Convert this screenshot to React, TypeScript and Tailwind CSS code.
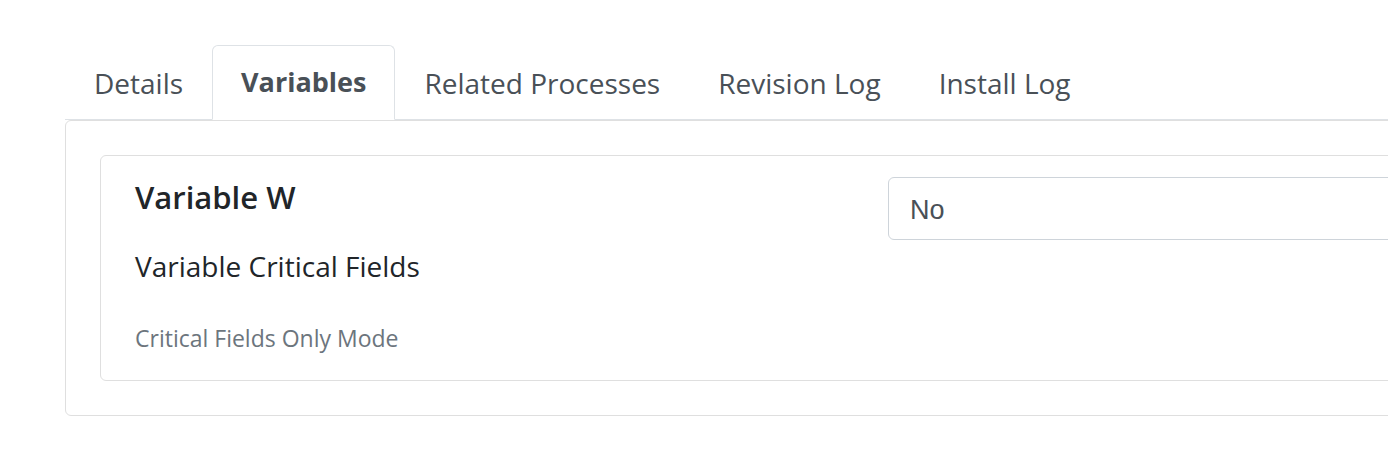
import React from "react";

const tabs = ["Details", "Variables", "Related Processes", "Revision Log", "Install Log"];

export default function App() {
  return (
    <div
      className="w-[1388px] h-[474px] overflow-hidden bg-white pt-[45px] pl-[65px]"
      style={{ fontFamily: '"Open Sans", "Noto Sans", sans-serif' }}
    >
      <div className="w-[1400px]">
        <ul className="flex border-b border-[#dee2e6]">
          {tabs.map((t) => {
            const active = t === "Variables";
            return (
              <li
                key={t}
                className={
                  active
                    ? "-mb-px h-[75px] px-[28px] flex items-center rounded-t-[6px] border border-[#dee2e6] border-b-white bg-white text-[27px] font-bold text-[#495057]"
                    : "-mb-px h-[75px] px-[28px] flex items-center border border-transparent text-[28px] text-[#495057]"
                }
              >
                {t}
              </li>
            );
          })}
        </ul>
        <div className="border border-[#dfdfdf] rounded-[6px] p-[34px]">
          <div className="border border-[#dfdfdf] rounded-[6px] pt-[21px] pb-[26px] px-[34px] flex">
            <div className="w-[753px] shrink-0">
              <h5 className="text-[31px] leading-[40px] font-semibold text-[#212529]">Variable W</h5>
              <div className="mt-[30px] text-[28px] leading-[38px] text-[#212529]">Variable Critical Fields</div>
              <div className="mt-[37px] text-[23px] leading-[32px] text-[#6c757d]">Critical Fields Only Mode</div>
            </div>
            <div className="flex-1">
              <div
                className="h-[63px] border border-[#ced4da] rounded-[6px] px-[21px] pt-[3px] flex items-center text-[27px] text-[#495057]"
                style={{ fontFamily: '"Liberation Sans", Arial, sans-serif' }}
              >
                No
              </div>
            </div>
          </div>
        </div>
      </div>
    </div>
  );
}
